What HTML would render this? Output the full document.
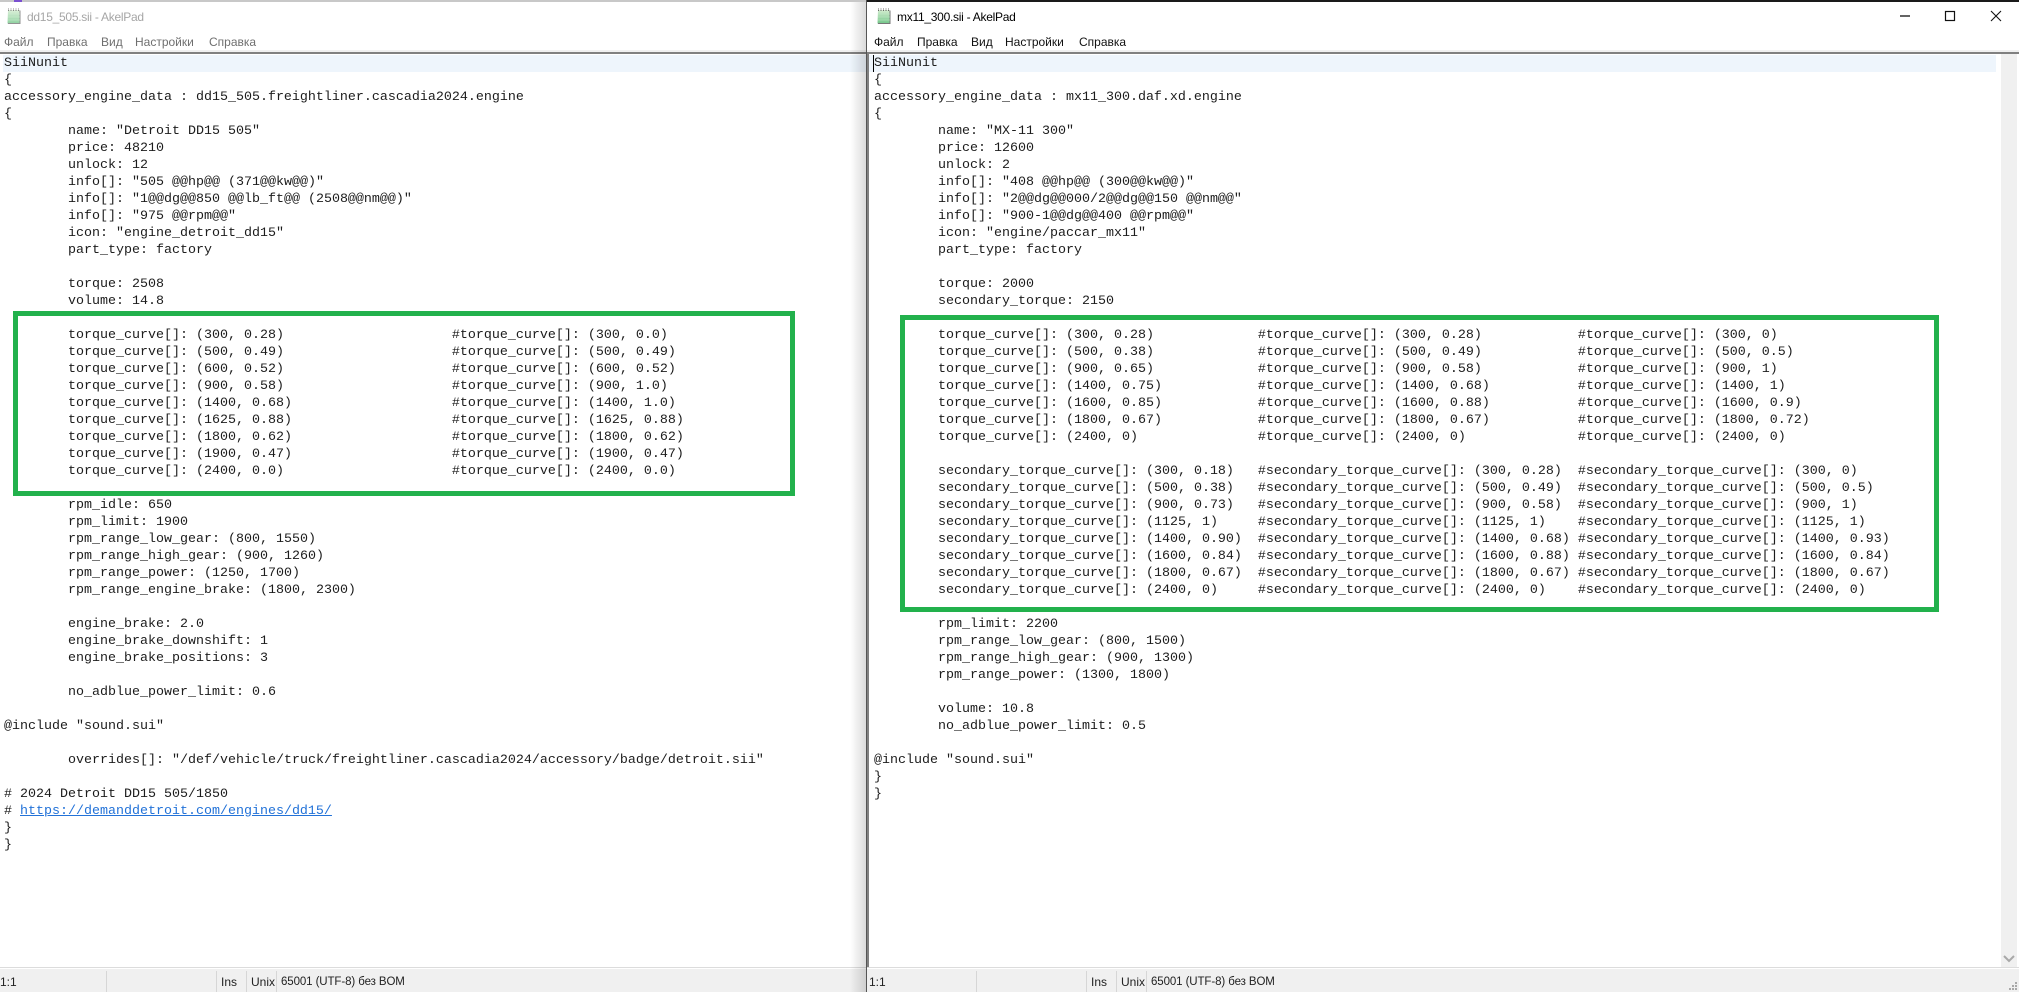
<!DOCTYPE html>
<html><head><meta charset="utf-8"><title>AkelPad</title>
<style>
html,body{margin:0;padding:0;background:#fff;width:2019px;height:992px;overflow:hidden}
div,pre,span{position:absolute;margin:0;padding:0}
.code span,.code a{position:static}
.code{font-family:"Liberation Mono",monospace;font-size:13.33px;line-height:17px;tab-size:8;color:#1c1c1c;top:55px;white-space:pre}
.code a{color:#2272d8;text-decoration:underline}
.ui{font-family:"Liberation Sans","Noto Sans CJK SC",sans-serif;font-size:12px;line-height:16px;white-space:nowrap}
.st{font-size:11.5px;letter-spacing:-.1px}
.ttl{font-size:12px;letter-spacing:-.27px}
.box{box-sizing:border-box;border:5px solid #22b14c}
.sep{width:1px;top:971px;height:21px;background:#d6d6d6}
</style></head><body>
<div style="left:0;top:0;width:867px;height:2px;background:#c8c8c8"></div>
<div style="left:14px;top:0;width:8px;height:2px;background:#7a4fd0"></div>
<div style="left:867px;top:0;width:1152px;height:2px;background:#1a1a1a"></div>

<!-- left window -->
<svg style="position:absolute;left:6px;top:8px;opacity:.8" width="16" height="17" viewBox="0 0 16 17"><defs><linearGradient id="g1" x1="0" y1="0" x2="0" y2="1"><stop offset="0" stop-color="#d4edd0"/><stop offset="1" stop-color="#74c68a"/></linearGradient></defs><path d="M2 2h12l-.4 13.500H1.500z" fill="url(#g1)"/><path d="M14 2.500v13H2" fill="none" stroke="#777"/><path d="M2 6h12M2 9h12M2 12h12" stroke="#bfe6c3" stroke-width=".6"/><path d="M2.500 0.500v2.500M5 0.500v2.500M7.500 0.500v2.500M10 0.500v2.500M12.500 0.500v2.500" stroke="#666" stroke-dasharray="1 .5"/></svg>
<div class="ui ttl" style="left:27px;top:9px;color:#a6a6a6">dd15_505.sii - AkelPad</div>
<div class="ui" style="left:4px;top:34px;color:#6f6f6f">Файл</div>
<div class="ui" style="left:47px;top:34px;color:#6f6f6f">Правка</div>
<div class="ui" style="left:101px;top:34px;color:#6f6f6f">Вид</div>
<div class="ui" style="left:135px;top:34px;color:#6f6f6f">Настройки</div>
<div class="ui" style="left:209px;top:34px;color:#6f6f6f">Справка</div>
<div style="left:0;top:50px;width:867px;height:2px;background:#f0f0f0"></div>
<div style="left:0;top:52px;width:867px;height:2px;background:#808080"></div>
<div style="left:3px;top:55px;width:864px;height:17px;background:#eef5fc"></div>
<pre class="code" style="left:4px">SiiNunit
{
accessory_engine_data : dd15_505.freightliner.cascadia2024.engine
{
	name: "Detroit DD15 505"
	price: 48210
	unlock: 12
	info[]: "505 @@hp@@ (371@@kw@@)"
	info[]: "1@@dg@@850 @@lb_ft@@ (2508@@nm@@)"
	info[]: "975 @@rpm@@"
	icon: "engine_detroit_dd15"
	part_type: factory

	torque: 2508
	volume: 14.8

	torque_curve[]: (300, 0.28)			#torque_curve[]: (300, 0.0)
	torque_curve[]: (500, 0.49)			#torque_curve[]: (500, 0.49)
	torque_curve[]: (600, 0.52)			#torque_curve[]: (600, 0.52)
	torque_curve[]: (900, 0.58)			#torque_curve[]: (900, 1.0)
	torque_curve[]: (1400, 0.68)			#torque_curve[]: (1400, 1.0)
	torque_curve[]: (1625, 0.88)			#torque_curve[]: (1625, 0.88)
	torque_curve[]: (1800, 0.62)			#torque_curve[]: (1800, 0.62)
	torque_curve[]: (1900, 0.47)			#torque_curve[]: (1900, 0.47)
	torque_curve[]: (2400, 0.0)			#torque_curve[]: (2400, 0.0)

	rpm_idle: 650
	rpm_limit: 1900
	rpm_range_low_gear: (800, 1550)
	rpm_range_high_gear: (900, 1260)
	rpm_range_power: (1250, 1700)
	rpm_range_engine_brake: (1800, 2300)

	engine_brake: 2.0
	engine_brake_downshift: 1
	engine_brake_positions: 3

	no_adblue_power_limit: 0.6

@include "sound.sui"

	overrides[]: "/def/vehicle/truck/freightliner.cascadia2024/accessory/badge/detroit.sii"

# 2024 Detroit DD15 505/1850
# <a>https://demanddetroit.com/engines/dd15/</a>
}
}</pre>
<div class="box" style="left:13px;top:311px;width:782px;height:185px"></div>
<div style="left:0;top:967px;width:867px;height:1px;background:#dcdcdc"></div>
<div style="left:0;top:969px;width:867px;height:23px;background:#f0f0f0"></div>
<div class="sep" style="left:106px"></div><div class="sep" style="left:216px"></div><div class="sep" style="left:246px"></div><div class="sep" style="left:276px"></div>
<div class="ui" style="left:0;top:974px;color:#222">1:1</div>
<div class="ui" style="left:221px;top:974px;color:#222">Ins</div>
<div class="ui" style="left:251px;top:974px;color:#222">Unix</div>
<div class="ui st" style="left:281px;top:974px;color:#222">65001 (UTF-8) без BOM</div>
<div style="left:850px;top:2px;width:16px;height:990px;background:linear-gradient(to right,rgba(0,0,0,0),rgba(0,0,0,.14))"></div>

<!-- right window -->
<div style="left:867px;top:2px;width:1152px;height:990px;background:#fff"></div>
<div style="left:866px;top:0;width:1px;height:992px;background:#555"></div>
<svg style="position:absolute;left:876px;top:8px" width="16" height="17" viewBox="0 0 16 17"><defs><linearGradient id="g2" x1="0" y1="0" x2="0" y2="1"><stop offset="0" stop-color="#d4edd0"/><stop offset="1" stop-color="#74c68a"/></linearGradient></defs><path d="M2 2h12l-.4 13.500H1.500z" fill="url(#g2)"/><path d="M14 2.500v13H2" fill="none" stroke="#777"/><path d="M2 6h12M2 9h12M2 12h12" stroke="#bfe6c3" stroke-width=".6"/><path d="M2.500 0.500v2.500M5 0.500v2.500M7.500 0.500v2.500M10 0.500v2.500M12.500 0.500v2.500" stroke="#666" stroke-dasharray="1 .5"/></svg>
<div class="ui ttl" style="left:897px;top:9px;color:#000">mx11_300.sii - AkelPad</div>
<div class="ui" style="left:874px;top:34px;color:#111">Файл</div>
<div class="ui" style="left:917px;top:34px;color:#111">Правка</div>
<div class="ui" style="left:971px;top:34px;color:#111">Вид</div>
<div class="ui" style="left:1005px;top:34px;color:#111">Настройки</div>
<div class="ui" style="left:1079px;top:34px;color:#111">Справка</div>
<svg style="position:absolute;left:1890px;top:5px" width="129" height="30" viewBox="0 0 129 30"><path d="M10 11h10" stroke="#111" stroke-width="1.3" fill="none"/><rect x="55.5" y="6.5" width="9" height="9" stroke="#111" stroke-width="1.2" fill="none"/><path d="M101 6l10 10M111 6l-10 10" stroke="#111" stroke-width="1.1" fill="none"/></svg>
<div style="left:867px;top:50px;width:1152px;height:2px;background:#f0f0f0"></div>
<div style="left:867px;top:52px;width:1152px;height:2px;background:#808080"></div>
<div style="left:867px;top:52px;width:2px;height:915px;background:#808080"></div>
<div style="left:869px;top:55px;width:1127px;height:17px;background:#eef5fc"></div>
<div style="left:873px;top:55px;width:1px;height:17px;background:#000"></div>
<pre class="code" style="left:874px">SiiNunit
{
accessory_engine_data : mx11_300.daf.xd.engine
{
	name: "MX-11 300"
	price: 12600
	unlock: 2
	info[]: "408 @@hp@@ (300@@kw@@)"
	info[]: "2@@dg@@000/2@@dg@@150 @@nm@@"
	info[]: "900-1@@dg@@400 @@rpm@@"
	icon: "engine/paccar_mx11"
	part_type: factory

	torque: 2000
	secondary_torque: 2150

	torque_curve[]: (300, 0.28)		#torque_curve[]: (300, 0.28)		#torque_curve[]: (300, 0)
	torque_curve[]: (500, 0.38)		#torque_curve[]: (500, 0.49)		#torque_curve[]: (500, 0.5)
	torque_curve[]: (900, 0.65)		#torque_curve[]: (900, 0.58)		#torque_curve[]: (900, 1)
	torque_curve[]: (1400, 0.75)		#torque_curve[]: (1400, 0.68)		#torque_curve[]: (1400, 1)
	torque_curve[]: (1600, 0.85)		#torque_curve[]: (1600, 0.88)		#torque_curve[]: (1600, 0.9)
	torque_curve[]: (1800, 0.67)		#torque_curve[]: (1800, 0.67)		#torque_curve[]: (1800, 0.72)
	torque_curve[]: (2400, 0)		#torque_curve[]: (2400, 0)		#torque_curve[]: (2400, 0)

	secondary_torque_curve[]: (300, 0.18)	#secondary_torque_curve[]: (300, 0.28)	#secondary_torque_curve[]: (300, 0)
	secondary_torque_curve[]: (500, 0.38)	#secondary_torque_curve[]: (500, 0.49)	#secondary_torque_curve[]: (500, 0.5)
	secondary_torque_curve[]: (900, 0.73)	#secondary_torque_curve[]: (900, 0.58)	#secondary_torque_curve[]: (900, 1)
	secondary_torque_curve[]: (1125, 1)	#secondary_torque_curve[]: (1125, 1)	#secondary_torque_curve[]: (1125, 1)
	secondary_torque_curve[]: (1400, 0.90)	#secondary_torque_curve[]: (1400, 0.68)	#secondary_torque_curve[]: (1400, 0.93)
	secondary_torque_curve[]: (1600, 0.84)	#secondary_torque_curve[]: (1600, 0.88)	#secondary_torque_curve[]: (1600, 0.84)
	secondary_torque_curve[]: (1800, 0.67)	#secondary_torque_curve[]: (1800, 0.67)	#secondary_torque_curve[]: (1800, 0.67)
	secondary_torque_curve[]: (2400, 0)	#secondary_torque_curve[]: (2400, 0)	#secondary_torque_curve[]: (2400, 0)

	rpm_limit: 2200
	rpm_range_low_gear: (800, 1500)
	rpm_range_high_gear: (900, 1300)
	rpm_range_power: (1300, 1800)

	volume: 10.8
	no_adblue_power_limit: 0.5

@include "sound.sui"
}
}</pre>
<div class="box" style="left:900px;top:315px;width:1039px;height:297px"></div>
<div style="left:2001px;top:54px;width:16px;height:913px;background:#f0f0f0"></div>
<svg style="position:absolute;left:2002px;top:954px" width="14" height="10" viewBox="0 0 14 10"><path d="M2 2l5 5 5-5" stroke="#a8a8a8" stroke-width="2" fill="none"/></svg>
<div style="left:867px;top:967px;width:1152px;height:1px;background:#dcdcdc"></div>
<div style="left:867px;top:969px;width:1152px;height:23px;background:#f0f0f0"></div>
<div class="sep" style="left:976px"></div><div class="sep" style="left:1086px"></div><div class="sep" style="left:1116px"></div><div class="sep" style="left:1146px"></div>
<div class="ui" style="left:869px;top:974px;color:#222">1:1</div>
<div class="ui" style="left:1091px;top:974px;color:#222">Ins</div>
<div class="ui" style="left:1121px;top:974px;color:#222">Unix</div>
<div class="ui st" style="left:1151px;top:974px;color:#222">65001 (UTF-8) без BOM</div>
<svg style="position:absolute;left:2008px;top:981px" width="10" height="10" viewBox="0 0 10 10"><path d="M7 1h2v2H7zM4 4h2v2H4zM7 4h2v2H7zM1 7h2v2H1zM4 7h2v2H4zM7 7h2v2H7z" fill="#a8a8a8"/></svg>
<div style="left:866px;top:0;width:1px;height:992px;background:#555"></div>
</body></html>
